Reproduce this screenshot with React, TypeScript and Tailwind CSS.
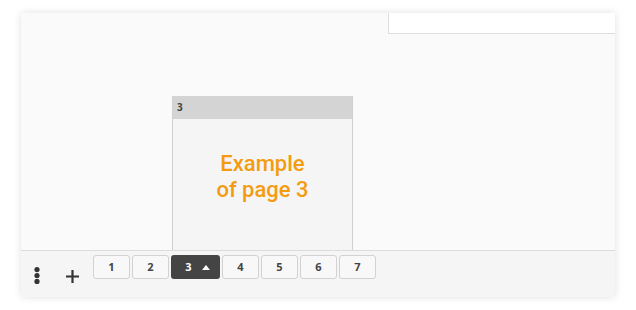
const tabs = [1, 2, 3, 4, 5, 6, 7];

function Tab({ n, active }: { n: number; active: boolean }) {
  if (active) {
    return (
      <div className="flex h-[24px] w-[49px] items-center justify-center gap-[10px] rounded-[3px] bg-[#444444] pl-[4px] text-[11px] font-bold text-white">
        <span>{n}</span>
        <svg width="8" height="5" viewBox="0 0 8 5">
          <path d="M0 5 L4 0 L8 5 Z" fill="#ffffff" />
        </svg>
      </div>
    );
  }
  return (
    <div className="flex h-[24px] w-[37px] items-center justify-center rounded-[3px] border border-[#d2d2d2] bg-[#f8f8f8] text-[11px] font-bold text-[#444444]">
      {n}
    </div>
  );
}

export default function App() {
  return (
    <div className="h-[310px] w-[636px] bg-white pl-[21px] pt-[13px] font-['Open_Sans',sans-serif]">
      <div className="flex h-[284px] w-[594px] flex-col shadow-[0_0_8px_rgba(0,0,0,0.12)]">
        {/* canvas */}
        <div className="flex flex-1 flex-col bg-[#fafafa]">
          <div className="flex justify-end">
            <div className="h-[21px] w-[227px] border-b border-l border-[#dedede] bg-white" />
          </div>
          <div className="ml-[151px] mt-auto flex h-[154px] w-[181px] flex-col border-x border-[#d0d0d0] bg-[#f5f5f5]">
            <div className="flex h-[23px] items-center bg-[#d4d4d4] pl-[4px] text-[10px] font-bold text-[#444444]">
              3
            </div>
            <div className="flex flex-1 items-start justify-center pt-[32px] text-center font-['Roboto',sans-serif] text-[22px] font-medium leading-[26px] text-[#f39c12]">
              Example
              <br />
              of page 3
            </div>
          </div>
        </div>
        {/* toolbar */}
        <div className="flex h-[47px] items-start border-t border-[#dcdcdc] bg-[#f5f5f5] pl-[13px]">
          <div className="flex h-[46px] items-center pt-[3px]">
            <svg width="6" height="17" viewBox="0 0 6 17">
              <circle cx="3" cy="2.6" r="2.6" fill="#333" />
              <circle cx="3" cy="8.5" r="2.6" fill="#333" />
              <circle cx="3" cy="14.4" r="2.6" fill="#333" />
            </svg>
          </div>
          <div className="ml-[26px] flex h-[46px] items-center pt-[4px]">
            <svg width="13" height="13" viewBox="0 0 13 13">
              <path d="M6.5 0 V13 M0 6.5 H13" stroke="#333" strokeWidth="2.2" />
            </svg>
          </div>
          <div className="ml-[14px] mt-[4px] flex gap-[2px]">
            {tabs.map((n) => (
              <Tab key={n} n={n} active={n === 3} />
            ))}
          </div>
        </div>
      </div>
    </div>
  );
}
